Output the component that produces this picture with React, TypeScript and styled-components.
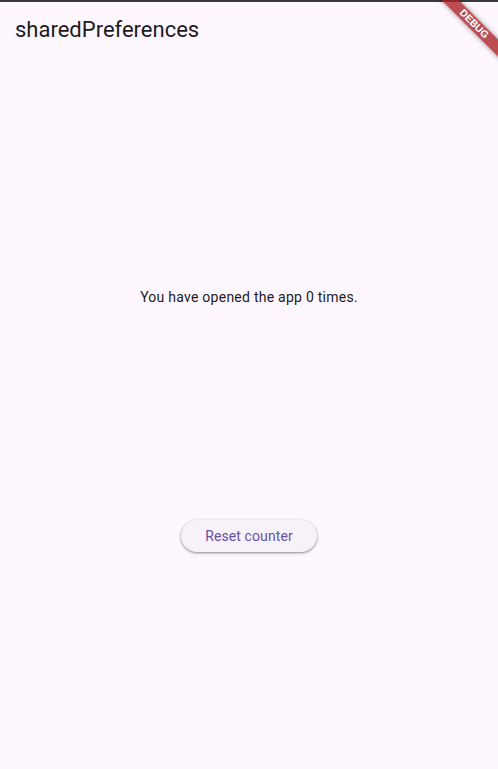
import React from "react";
import styled, { createGlobalStyle } from "styled-components";

const Global = createGlobalStyle`
  html, body { margin: 0; padding: 0; background: #fef7ff; }
  body { font-family: Roboto, "Noto Sans", sans-serif; }
`;

const Screen = styled.div`
  position: relative;
  width: 498px;
  height: 769px;
  overflow: hidden;
  background: #fef7ff;
  display: flex;
  flex-direction: column;
`;

const TopStrip = styled.div`
  height: 2px;
  background: #3b3b3b;
  flex: none;
`;

const AppBar = styled.header`
  height: 56px;
  display: flex;
  align-items: center;
  padding: 0 15px;
  flex: none;
`;

const Title = styled.h1`
  margin: 0;
  font-family: Roboto, sans-serif;
  font-size: 22px;
  font-weight: 400;
  color: #1d1b20;
  line-height: 28px;
`;

const Body = styled.main`
  flex: 1;
  display: flex;
  flex-direction: column;
  align-items: center;
`;

const Message = styled.p`
  margin: 229px 0 0;
  font-family: Roboto, sans-serif;
  font-size: 14px;
  letter-spacing: 0.25px;
  line-height: 20px;
  color: #1d1b20;
`;

const ResetButton = styled.button`
  margin-top: 213px;
  height: 32px;
  padding: 0 24px;
  border: none;
  border-radius: 16px;
  background: #f7f2fa;
  color: #6750a4;
  font-family: Roboto, sans-serif;
  font-size: 14px;
  font-weight: 400;
  letter-spacing: 0.1px;
  box-shadow: 0 1px 2px rgba(0, 0, 0, 0.3), 0 1px 3px 1px rgba(0, 0, 0, 0.12);
  cursor: pointer;
`;

const Banner = styled.div`
  position: absolute;
  left: 414px;
  top: 18px;
  width: 120px;
  height: 12px;
  transform: rotate(45deg);
  background: rgba(170, 35, 40, 0.8);
  box-shadow: 0 0 5px rgba(0, 0, 0, 0.45);
  color: #fff;
  font-family: "Liberation Sans", Arial, sans-serif;
  font-size: 10px;
  font-weight: 900;
  line-height: 12px;
  text-align: center;
  letter-spacing: 0;
`;

export default function App() {
  return (
    <>
      <Global />
      <Screen>
        <TopStrip />
        <AppBar>
          <Title>sharedPreferences</Title>
        </AppBar>
        <Body>
          <Message>You have opened the app 0 times.</Message>
          <ResetButton>Reset counter</ResetButton>
        </Body>
        <Banner>DEBUG</Banner>
      </Screen>
    </>
  );
}
